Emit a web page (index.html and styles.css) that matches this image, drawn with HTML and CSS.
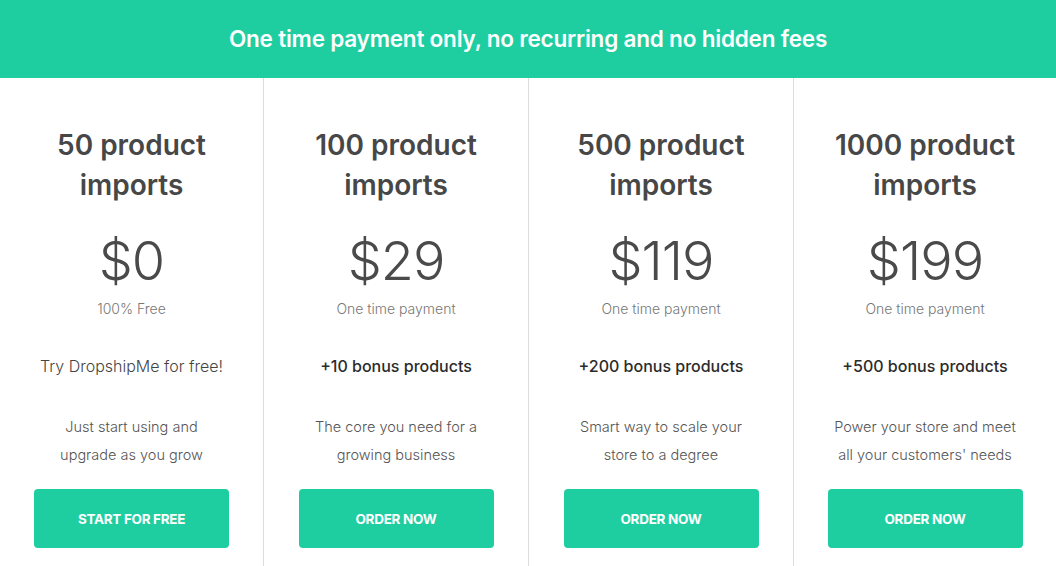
FILE: index.html
```html
<!DOCTYPE html>
<html>
<head>
<meta charset="utf-8">
<link rel="stylesheet" href="styles.css">
</head>
<body>
<div class="banner">One time payment only, no recurring and no hidden fees</div>
<div class="plans">
  <div class="plan">
    <h2 class="title">50 product<br>imports</h2>
    <div class="price">$0</div>
    <div class="note">100% Free</div>
    <div class="bonus light">Try DropshipMe for free!</div>
    <p class="desc">Just start using and<br>upgrade as you grow</p>
    <a class="btn">START FOR FREE</a>
  </div>
  <div class="plan">
    <h2 class="title">100 product<br>imports</h2>
    <div class="price">$29</div>
    <div class="note">One time payment</div>
    <div class="bonus">+10 bonus products</div>
    <p class="desc">The core you need for a<br>growing business</p>
    <a class="btn">ORDER NOW</a>
  </div>
  <div class="plan">
    <h2 class="title">500 product<br>imports</h2>
    <div class="price">$119</div>
    <div class="note">One time payment</div>
    <div class="bonus">+200 bonus products</div>
    <p class="desc">Smart way to scale your<br>store to a degree</p>
    <a class="btn">ORDER NOW</a>
  </div>
  <div class="plan">
    <h2 class="title">1000 product<br>imports</h2>
    <div class="price">$199</div>
    <div class="note">One time payment</div>
    <div class="bonus">+500 bonus products</div>
    <p class="desc">Power your store and meet<br>all your customers' needs</p>
    <a class="btn">ORDER NOW</a>
  </div>
</div>
</body>
</html>
```
FILE: styles.css
```css
* { box-sizing: border-box; }
html, body { margin: 0; padding: 0; background: #fff; }
body {
  font-family: "Inter", "Noto Sans", sans-serif;
  width: 1056px;
  height: 566px;
  overflow: hidden;
}
.banner {
  height: 78px;
  background: #1ecea1;
  color: #fff;
  font-size: 22.5px;
  font-weight: 600;
  display: flex;
  align-items: center;
  justify-content: center;
  letter-spacing: -0.2px;
  padding-bottom: 2px;
}
.plans {
  display: grid;
  grid-template-columns: 263px 265px 265px 263px;
}
.plan {
  display: flex;
  flex-direction: column;
  align-items: center;
  text-align: center;
  padding-top: 47px;
  height: 488px;
}
.plan + .plan { border-left: 1px solid #dcdcdc; }
.title {
  margin: 0;
  font-size: 28px;
  font-weight: 600;
  line-height: 40px;
  color: #474747;
}
.price {
  margin-top: 21px;
  font-size: 54px;
  font-weight: 300;
  line-height: 70px;
  color: #4a4a4a;
  letter-spacing: -1px;
}
.note {
  margin-top: 3px;
  font-size: 14px;
  font-weight: 300;
  color: #777;
  line-height: 20px;
}
.bonus {
  margin-top: 36px;
  font-size: 16px;
  font-weight: 500;
  color: #2b2b2b;
  line-height: 22px;
}
.bonus.light { font-weight: 300; color: #444; }
.desc {
  margin: 36px 0 0;
  font-size: 14.5px;
  font-weight: 300;
  line-height: 28px;
  color: #555;
}
.btn {
  margin-top: 20px;
  width: 195px;
  height: 59px;
  border-radius: 4px;
  background: #1ecea1;
  color: #fff;
  font-size: 13.5px;
  font-weight: 700;
  display: flex;
  align-items: center;
  justify-content: center;
  letter-spacing: -0.3px;
}
```
